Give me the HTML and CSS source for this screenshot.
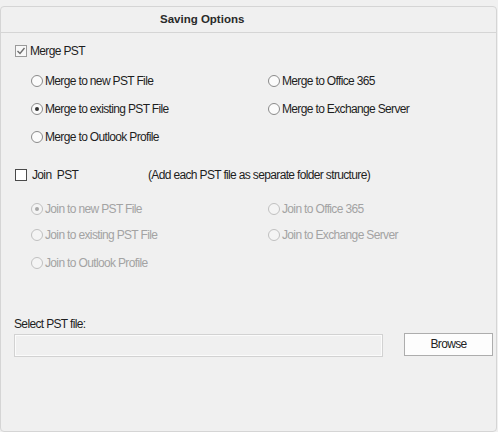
FILE: index.html
```html
<!DOCTYPE html>
<html>
<head>
<meta charset="utf-8">
<link rel="stylesheet" href="styles.css">
</head>
<body>
<div class="panel">
  <div class="panel-head">Saving Options</div>
  <div class="panel-body">
    <div class="check-row merge-row">
      <span class="box box-checked"><svg width="10" height="10" viewBox="0 0 10 10"><polyline points="1.5,5 4,7.5 8.5,2" fill="none" stroke="#6e6e6e" stroke-width="1.4"/></svg></span>
      <span>Merge PST</span>
    </div>
    <div class="opt-grid merge-grid">
      <label class="opt"><span class="radio"></span>Merge to new PST File</label>
      <label class="opt"><span class="radio"></span>Merge to Office 365</label>
      <label class="opt"><span class="radio radio-on"></span>Merge to existing PST File</label>
      <label class="opt"><span class="radio"></span>Merge to Exchange Server</label>
      <label class="opt"><span class="radio"></span>Merge to Outlook Profile</label>
    </div>
    <div class="check-row join-row">
      <span class="box box-dark"></span>
      <span class="join-label">Join&nbsp; PST</span>
      <span class="note">(Add each PST file as separate folder structure)</span>
    </div>
    <div class="opt-grid join-grid off">
      <label class="opt"><span class="radio radio-on"></span>Join to new PST File</label>
      <label class="opt"><span class="radio"></span>Join to Office 365</label>
      <label class="opt"><span class="radio"></span>Join to existing PST File</label>
      <label class="opt"><span class="radio"></span>Join to Exchange Server</label>
      <label class="opt"><span class="radio"></span>Join to Outlook Profile</label>
    </div>
    <div class="file-label">Select PST file:</div>
    <div class="file-row">
      <div class="file-input"></div>
      <div class="btn">Browse</div>
    </div>
  </div>
</div>
</body>
</html>
```
FILE: styles.css
```css
* { box-sizing: border-box; }
html, body { margin: 0; padding: 0; background: #f0f0f0; }
body {
  width: 498px;
  height: 432px;
  overflow: hidden;
  font-family: "Liberation Sans", Arial, sans-serif;
  font-size: 12px;
  letter-spacing: -0.65px;
  color: #1e1e1e;
}
.panel {
  margin-top: 6px;
  width: 497px;
  height: 426px;
  border: 1px solid #d5d5d5;
  border-radius: 4px;
}
.panel-head {
  height: 26px;
  border-bottom: 1px solid #d5d5d5;
  padding-left: 159px;
  line-height: 25px;
  font-weight: bold;
  font-size: 11.5px;
  letter-spacing: 0;
  color: #2a2a2a;
}
.panel-body { padding-left: 13px; }
.check-row {
  display: flex;
  align-items: center;
  height: 16px;
  padding-left: 1px;
  line-height: 16px;
}
.merge-row { margin-top: 10px; gap: 3px; }
.join-row { margin-top: 16px; gap: 5px; }
.join-label { width: 111px; }
.box {
  width: 12px;
  height: 12px;
  border: 1px solid #9a9a9a;
  background: #f8f8f8;
  display: flex;
  align-items: center;
  justify-content: center;
}
.box-dark { border-color: #4a4a4a; background: #fff; }
.opt-grid {
  display: grid;
  grid-template-columns: 237px 1fr;
  margin-left: 17px;
}
.merge-grid { margin-top: 8px; grid-auto-rows: 28px; }
.join-grid { margin-top: 14px; grid-template-rows: 24px 28px 28px; }
.opt {
  display: flex;
  align-items: center;
  gap: 2px;
  white-space: nowrap;
}
.radio {
  width: 12px;
  height: 12px;
  border-radius: 50%;
  border: 1px solid #8a8a8a;
  background: #fbfbfb;
  display: flex;
  align-items: center;
  justify-content: center;
  flex: none;
}
.radio-on::after {
  content: "";
  width: 4px;
  height: 4px;
  border-radius: 50%;
  background: #333;
}
.off { color: #a3a3a3; }
.off .radio { border-color: #c0c0c0; background: #f4f4f4; }
.off .radio-on::after { background: #a8a8a8; }
.file-label { margin-top: 40px; line-height: 14px; height: 14px; }
.file-row { display: flex; align-items: flex-start; margin-top: 2px; }
.file-input {
  margin-top: 1px;
  width: 369px;
  height: 23px;
  border: 1px solid #d2d2d2;
  box-shadow: inset 0 0 0 1px #fbfbfb;
  background: #f0f0f0;
}
.btn {
  margin-left: 21px;
  width: 89px;
  height: 23px;
  border: 1px solid #adadad;
  background: #fdfdfd;
  color: #222;
  text-align: center;
  line-height: 21px;
}
```
